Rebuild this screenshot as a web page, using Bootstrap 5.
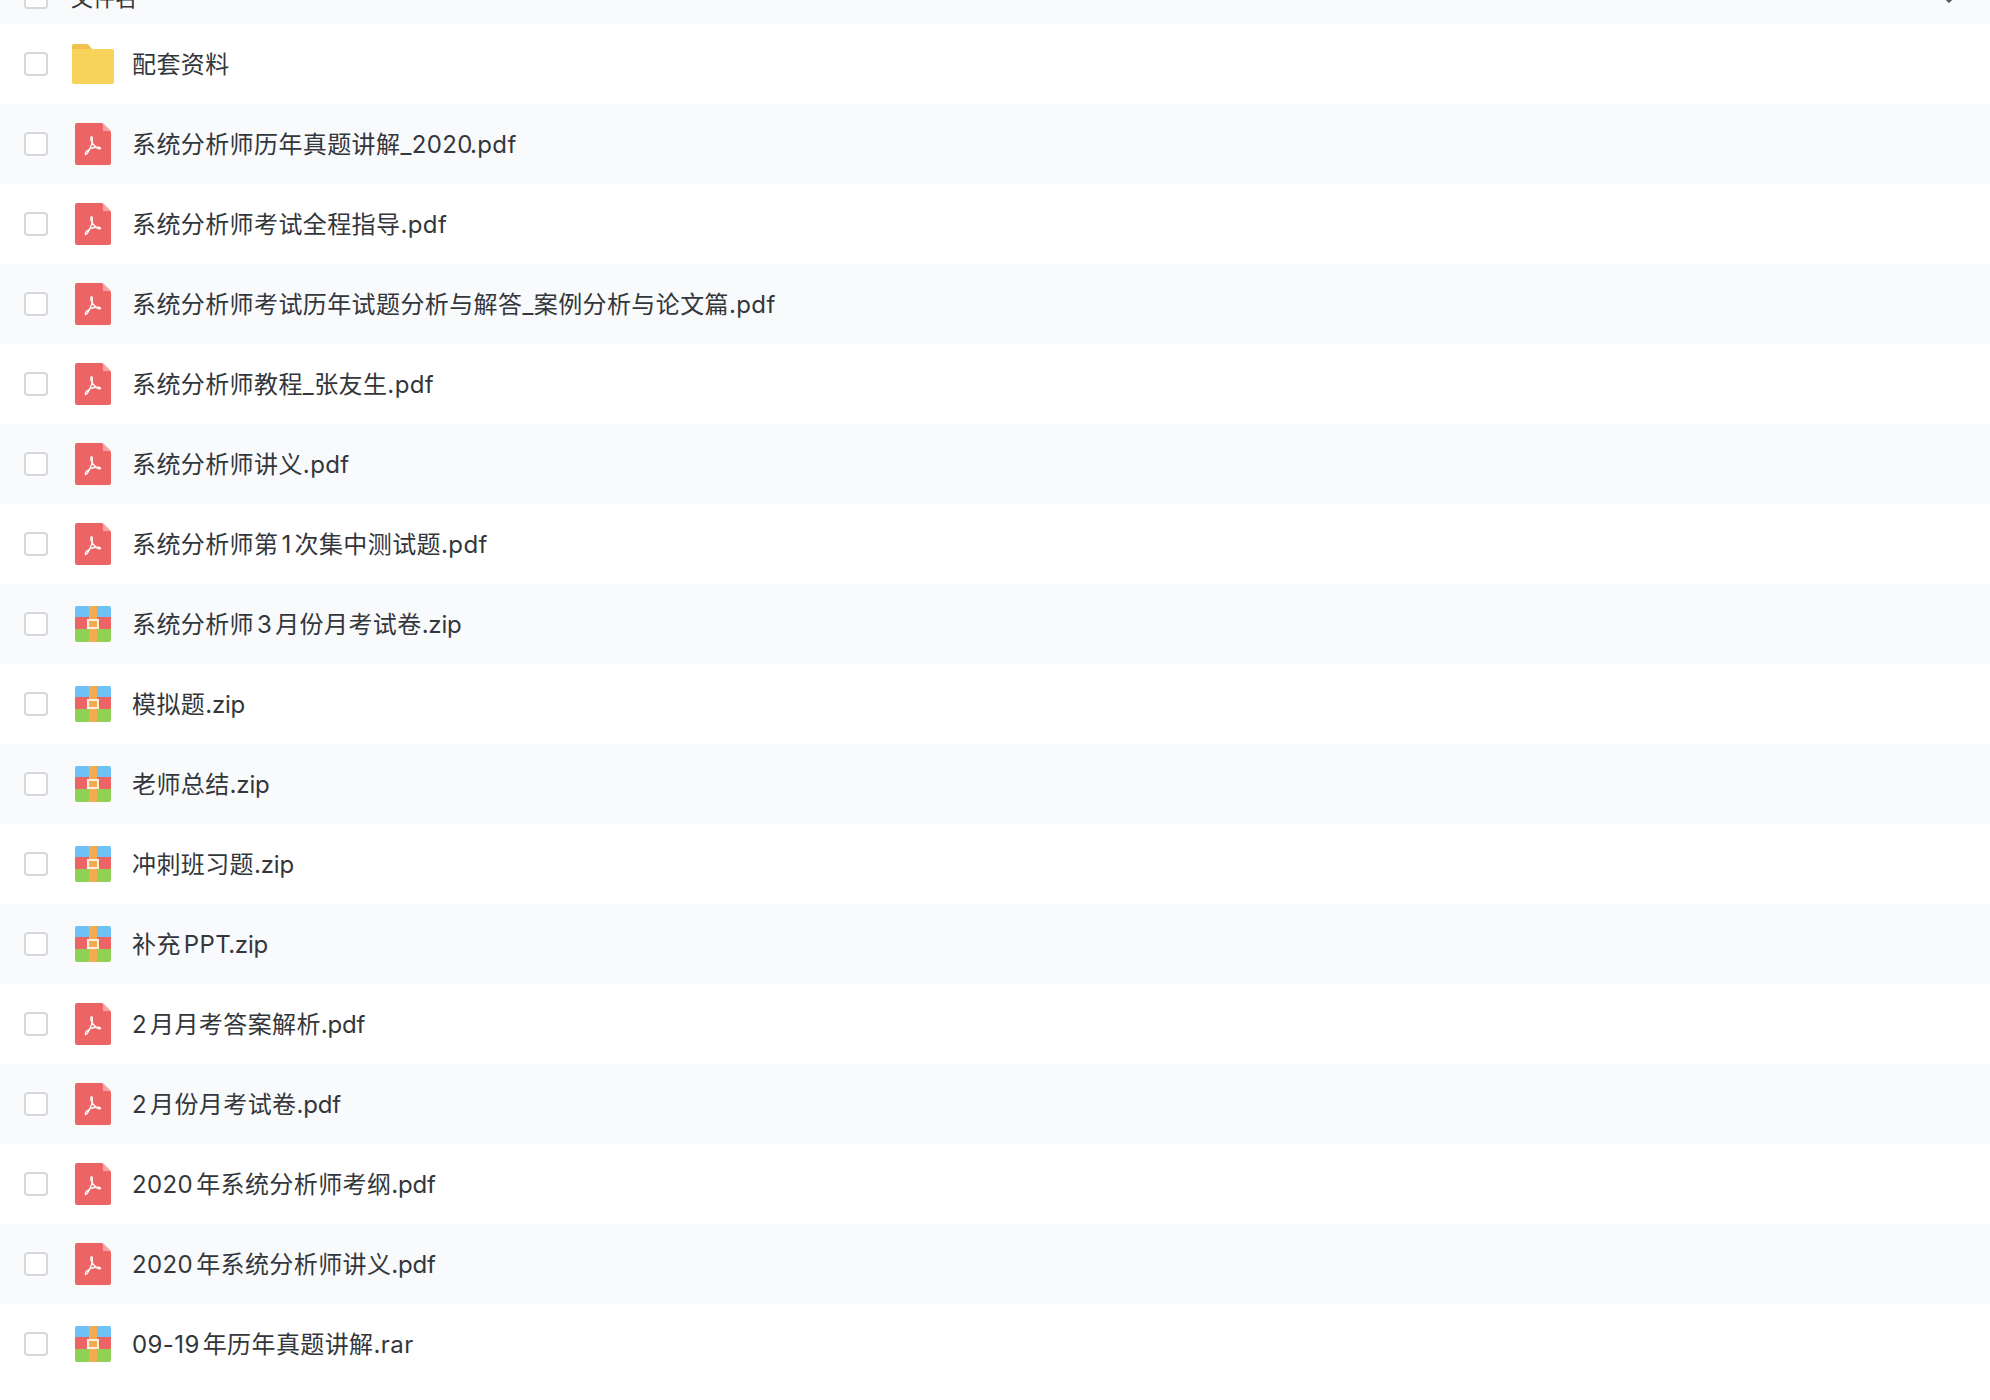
<!DOCTYPE html>
<html lang="zh-CN">
<head>
  <meta charset="UTF-8" />
  <meta name="viewport" content="width=device-width, initial-scale=1" />
  <title>文件列表</title>
  <link href="https://cdn.jsdelivr.net/npm/bootstrap@5.3.3/dist/css/bootstrap.min.css" rel="stylesheet" />
  <style>
    html, body {
      height: 100%;
      overflow: hidden;
    }

    body {
      background: #fff;
      color: #33363b;
      font-family: "Inter", "Noto Sans CJK SC", sans-serif;
      font-size: 24px;
      text-autospace: normal;
    }

    .file-list {
      margin-top: -30px;
    }

    .file-head {
      height: 54px;
      color: #55585d;
      font-size: 22px;
    }

    .file-row {
      height: 80px;
    }

    .file-head,
    .file-row {
      padding-left: 24px;
      padding-right: 24px;
      border: 0;
      background: #fff;
      color: inherit;
    }

    .file-head,
    .file-row:nth-child(odd) {
      background: #f9fafc;
    }

    .file-check {
      width: 24px;
      height: 24px;
      margin: 0;
      flex: none;
      border: 2px solid #d6d8db;
      border-radius: 4px;
      background-color: #fff;
    }

    .file-icon {
      width: 60px;
      flex: none;
      margin-left: 24px;
    }

    .ps-icon {
      padding-left: 3px;
    }

    .file-name {
      padding-top: 2px;
      letter-spacing: .4px;
    }

    .file-ext {
      margin-left: -3px;
    }

    .ext-tight {
      margin-left: -3px;
      letter-spacing: -.2px;
    }

    .file-head .file-name {
      margin-left: 23px;
      letter-spacing: 0;
    }

    .sort-caret {
      width: 16px;
      height: 12px;
      margin-right: 9px;
    }
  </style>
</head>
<body>
  <svg width="0" height="0" class="d-none">
    <symbol id="ico-folder" viewBox="0 0 42 40">
      <path d="M0 2a2 2 0 0 1 2-2h12c2 0 3 1 4 2.500l2 2.500H0z" fill="#f0c14f" />
      <path d="M0 5h40a2 2 0 0 1 2 2v31a2 2 0 0 1-2 2H2a2 2 0 0 1-2-2z" fill="#f8d35b" />
    </symbol>
    <symbol id="ico-pdf" viewBox="0 0 36 42">
      <path d="M2 0h25l9 9v31a2 2 0 0 1-2 2H2a2 2 0 0 1-2-2V2a2 2 0 0 1 2-2z" fill="#ec6464" />
      <path d="M28 0l8 8h-8z" fill="#f6a3a3" />
      <path d="M10.500 31.500C12 32 14 28 16 23c1-3 2-7 1-9-1-1-1.500 1-1 3 1 3 3 6 6 8 2 1.500 4 1 3.500 0-.5-1-4.500-1-8.500 0-3 1-7.500 4-6.500 6.500z" fill="none" stroke="#fff" stroke-width="1.300" stroke-linejoin="round" />
    </symbol>
    <symbol id="ico-zip" viewBox="0 0 36 36">
      <path d="M2 0h32a2 2 0 0 1 2 2v9H0V2a2 2 0 0 1 2-2z" fill="#6cc1f6" />
      <path d="M0 11h36v12H0z" fill="#ec6464" />
      <path d="M0 23h36v11a2 2 0 0 1-2 2H2a2 2 0 0 1-2-2z" fill="#8fd154" />
      <path d="M14 0h8v36h-8z" fill="#f5ab50" />
      <rect x="13" y="14" width="10" height="8" fill="#f5ab50" stroke="#fbeedd" stroke-width="2" />
    </symbol>
  </svg>

  <ul class="list-group list-group-flush file-list">
    <li class="list-group-item d-flex align-items-center file-head">
      <span class="form-check-input file-check"></span>
      <span class="file-name">文件名</span>
      <svg class="sort-caret ms-auto" viewBox="0 0 16 12"><path d="M3 5l5 5 5-5" fill="none" stroke="#55585d" stroke-width="3" /></svg>
    </li>
    <li class="list-group-item d-flex align-items-center file-row"><span class="form-check-input file-check"></span><span class="file-icon d-flex"><svg width="42" height="40"><use href="#ico-folder" /></svg></span><span class="file-name">配套资料</span></li>
    <li class="list-group-item d-flex align-items-center file-row"><span class="form-check-input file-check"></span><span class="file-icon d-flex ps-icon"><svg width="36" height="42"><use href="#ico-pdf" /></svg></span><span class="file-name">系统分析师历年真题讲解_2020<span class="file-ext">.pdf</span></span></li>
    <li class="list-group-item d-flex align-items-center file-row"><span class="form-check-input file-check"></span><span class="file-icon d-flex ps-icon"><svg width="36" height="42"><use href="#ico-pdf" /></svg></span><span class="file-name">系统分析师考试全程指导<span class="file-ext">.pdf</span></span></li>
    <li class="list-group-item d-flex align-items-center file-row"><span class="form-check-input file-check"></span><span class="file-icon d-flex ps-icon"><svg width="36" height="42"><use href="#ico-pdf" /></svg></span><span class="file-name">系统分析师考试历年试题分析与解答_案例分析与论文篇<span class="file-ext">.pdf</span></span></li>
    <li class="list-group-item d-flex align-items-center file-row"><span class="form-check-input file-check"></span><span class="file-icon d-flex ps-icon"><svg width="36" height="42"><use href="#ico-pdf" /></svg></span><span class="file-name">系统分析师教程_张友生<span class="file-ext">.pdf</span></span></li>
    <li class="list-group-item d-flex align-items-center file-row"><span class="form-check-input file-check"></span><span class="file-icon d-flex ps-icon"><svg width="36" height="42"><use href="#ico-pdf" /></svg></span><span class="file-name">系统分析师讲义<span class="file-ext">.pdf</span></span></li>
    <li class="list-group-item d-flex align-items-center file-row"><span class="form-check-input file-check"></span><span class="file-icon d-flex ps-icon"><svg width="36" height="42"><use href="#ico-pdf" /></svg></span><span class="file-name">系统分析师第1次集中测试题<span class="file-ext">.pdf</span></span></li>
    <li class="list-group-item d-flex align-items-center file-row"><span class="form-check-input file-check"></span><span class="file-icon d-flex ps-icon"><svg width="36" height="36"><use href="#ico-zip" /></svg></span><span class="file-name">系统分析师3月份月考试卷<span class="ext-tight">.zip</span></span></li>
    <li class="list-group-item d-flex align-items-center file-row"><span class="form-check-input file-check"></span><span class="file-icon d-flex ps-icon"><svg width="36" height="36"><use href="#ico-zip" /></svg></span><span class="file-name">模拟题<span class="ext-tight">.zip</span></span></li>
    <li class="list-group-item d-flex align-items-center file-row"><span class="form-check-input file-check"></span><span class="file-icon d-flex ps-icon"><svg width="36" height="36"><use href="#ico-zip" /></svg></span><span class="file-name">老师总结<span class="ext-tight">.zip</span></span></li>
    <li class="list-group-item d-flex align-items-center file-row"><span class="form-check-input file-check"></span><span class="file-icon d-flex ps-icon"><svg width="36" height="36"><use href="#ico-zip" /></svg></span><span class="file-name">冲刺班习题<span class="ext-tight">.zip</span></span></li>
    <li class="list-group-item d-flex align-items-center file-row"><span class="form-check-input file-check"></span><span class="file-icon d-flex ps-icon"><svg width="36" height="36"><use href="#ico-zip" /></svg></span><span class="file-name">补充PPT<span class="ext-tight">.zip</span></span></li>
    <li class="list-group-item d-flex align-items-center file-row"><span class="form-check-input file-check"></span><span class="file-icon d-flex ps-icon"><svg width="36" height="42"><use href="#ico-pdf" /></svg></span><span class="file-name">2月月考答案解析<span class="ext-tight">.pdf</span></span></li>
    <li class="list-group-item d-flex align-items-center file-row"><span class="form-check-input file-check"></span><span class="file-icon d-flex ps-icon"><svg width="36" height="42"><use href="#ico-pdf" /></svg></span><span class="file-name">2月份月考试卷<span class="ext-tight">.pdf</span></span></li>
    <li class="list-group-item d-flex align-items-center file-row"><span class="form-check-input file-check"></span><span class="file-icon d-flex ps-icon"><svg width="36" height="42"><use href="#ico-pdf" /></svg></span><span class="file-name">2020年系统分析师考纲<span class="ext-tight">.pdf</span></span></li>
    <li class="list-group-item d-flex align-items-center file-row"><span class="form-check-input file-check"></span><span class="file-icon d-flex ps-icon"><svg width="36" height="42"><use href="#ico-pdf" /></svg></span><span class="file-name">2020年系统分析师讲义<span class="ext-tight">.pdf</span></span></li>
    <li class="list-group-item d-flex align-items-center file-row"><span class="form-check-input file-check"></span><span class="file-icon d-flex ps-icon"><svg width="36" height="36"><use href="#ico-zip" /></svg></span><span class="file-name">09-19年历年真题讲解<span class="file-ext">.rar</span></span></li>
  </ul>

  <script src="https://cdn.jsdelivr.net/npm/bootstrap@5.3.3/dist/js/bootstrap.bundle.min.js"></script>
</body>
</html>
